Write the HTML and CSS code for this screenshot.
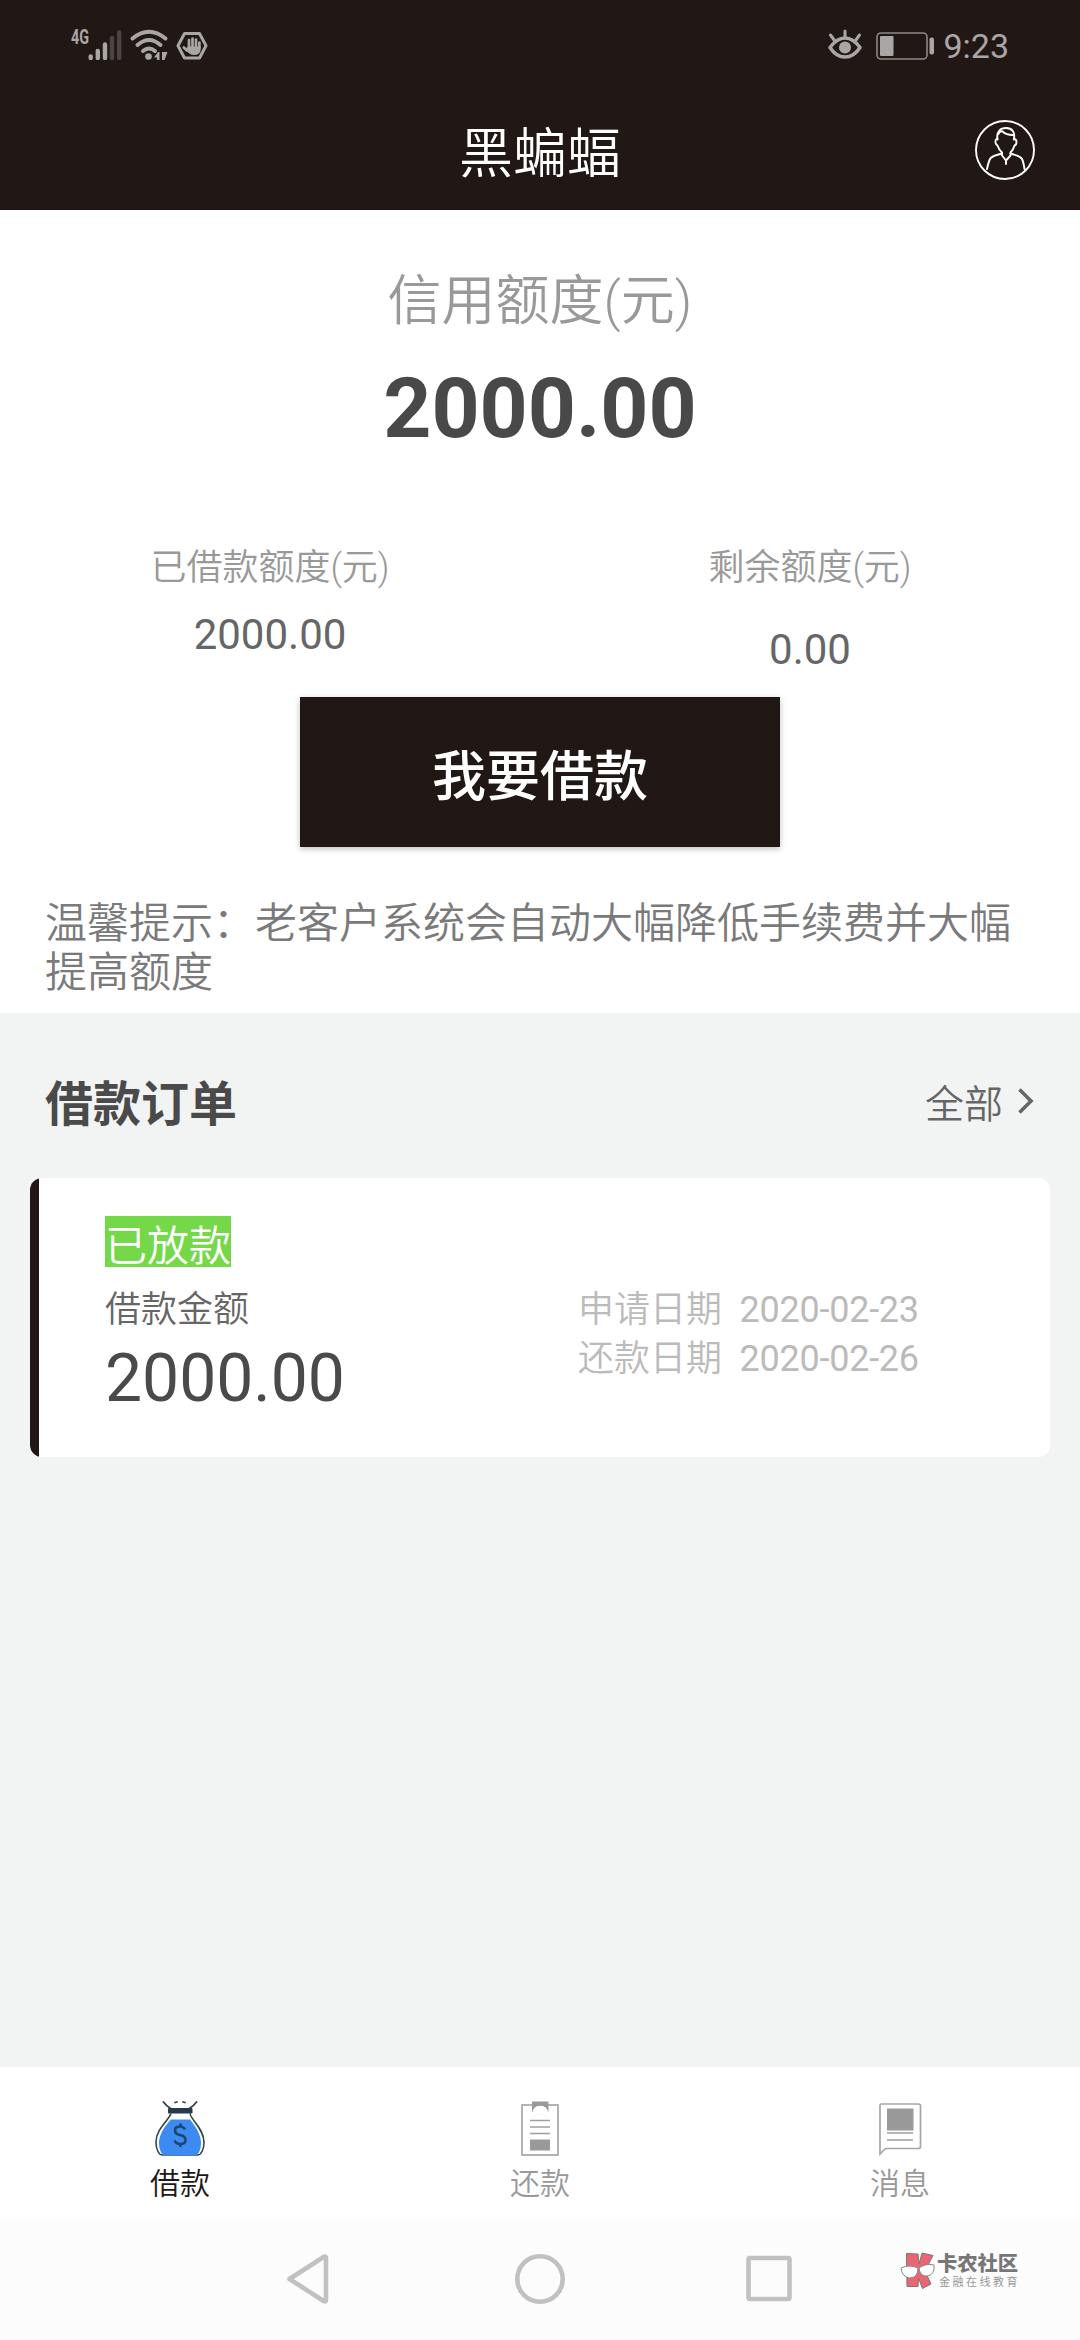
FILE: index.html
```html
<!DOCTYPE html>
<html lang="zh-CN">
<head>
<meta charset="utf-8">
<title>黑蝙蝠</title>
<link rel="stylesheet" href="styles.css">
</head>
<body>
<div class="screen">
  <header class="top">
    <div class="status">
      <svg class="status-left" viewBox="0 0 140 40" fill="none">
        <text class="net" x="1" y="24" textLength="18" lengthAdjust="spacingAndGlyphs">4G</text>
        <g stroke-width="4.4" stroke-linecap="round">
          <path class="lit" d="M20.700 36.500V38M27.800 31V38M35 24.500V38"/>
          <path class="dim" d="M42 18V38M49.200 12.500V38"/>
        </g>
        <g class="lit" stroke-width="4" stroke-linecap="round">
          <path d="M62.500 18.500Q79 5 95.500 18.500M67.500 25Q79 15 90.500 25M73 31Q79 26 85 31"/>
        </g>
        <circle class="fill" cx="78.500" cy="36.500" r="3.300"/>
        <path class="fill" d="M89.500 32V40H87V37.500H84L88 32zM92 32H97.500L94.500 40H92z"/>
        <path class="lit" stroke-width="3" stroke-linejoin="round" d="M108 25.700L114.500 13.500H129.500L136 25.700L129.500 38H114.500z"/>
        <path class="lit" stroke-width="2.700" stroke-linecap="round" d="M119 28V20M122.500 27V18.500M126 27V19.500M129.400 28V22.500M117 30.500L113.800 27.500"/>
        <path class="fill" d="M117.700 26.500H130.700V29Q130.500 35 124 35Q119.500 35 115.500 29.500z"/>
      </svg>
      <div class="status-right">
        <svg class="eye" viewBox="0 0 34 32" fill="none">
          <path class="lit" stroke-width="3.400" stroke-linejoin="round" d="M2 18.500Q9 9 17 9T32 18.500Q26 28 17 28T2 18.500z"/>
          <circle class="fill" cx="17" cy="18.500" r="6"/>
          <path class="lit" stroke-width="3" stroke-linecap="round" d="M17 2V8M2.500 6L6.500 11.500M31.500 6L27.500 11.500"/>
        </svg>
        <svg class="battery" viewBox="0 0 58 28" fill="none">
          <rect class="outline" x="1" y="1" width="50" height="26" rx="4" stroke-width="1.600"/>
          <rect class="fill" x="4" y="4" width="13.500" height="20" rx="1"/>
          <rect class="fill" x="53.500" y="5.500" width="4.500" height="17" rx="2"/>
        </svg>
        <span class="clock">9:23</span>
      </div>
    </div>
    <div class="titlebar">
      <span class="spacer"></span>
      <h1 class="title">黑蝙蝠</h1>
      <svg class="avatar" viewBox="0 0 60 60" fill="none" stroke="#fff" stroke-width="1.900" stroke-linejoin="round" stroke-linecap="round">
        <circle cx="30" cy="30" r="29"/>
        <path d="M22.500 19.500C21 11 26 8 31 8C37 8 40.500 12 38.800 19.500M23.500 14Q25 10.500 27.500 11.500Q32 15.500 39 15"/>
        <path d="M22.500 19Q20 19 20.500 22.500Q21 25 22.500 25.500Q24 30 27 32.500V35.500L31 40.500L35.500 35.500V32.500Q38.500 29.500 39.500 25.500Q41.500 25 41.500 22Q41.500 19 39 19M31 40.500V44"/>
        <path d="M27 33.500C21 35.500 17 35.500 15 39Q13.500 42 12 49M35.500 33.500C41 35.500 45 35.500 47 39Q48.500 42 49.500 49"/>
      </svg>
    </div>
  </header>

  <section class="credit">
    <div class="credit-label">信用额度(元)</div>
    <div class="credit-total">2000.00</div>
    <div class="split">
      <div class="col"><div class="col-label">已借款额度(元)</div><div class="col-value">2000.00</div></div>
      <div class="col"><div class="col-label">剩余额度(元)</div><div class="col-value low">0.00</div></div>
    </div>
    <button class="borrow">我要借款</button>
    <p class="tip">温馨提示：老客户系统会自动大幅降低手续费并大幅提高额度</p>
  </section>

  <main class="orders">
    <div class="orders-head">
      <h2 class="orders-title">借款订单</h2>
      <div class="all"><span>全部</span>
        <svg class="chevron" viewBox="0 0 18 28" fill="none"><path d="M2.500 2.500L14 14L2.500 25.500" stroke="#666" stroke-width="3.600"/></svg>
      </div>
    </div>
    <article class="card">
      <div class="card-bar"></div>
      <div class="card-main">
        <span class="badge">已放款</span>
        <div class="amount-label">借款金额</div>
        <div class="amount">2000.00</div>
      </div>
      <div class="dates">
        <div class="date">申请日期&nbsp; <span class="day">2020-02-23</span></div>
        <div class="date">还款日期&nbsp; <span class="day">2020-02-26</span></div>
      </div>
    </article>
  </main>

  <nav class="tabs">
    <div class="tab active">
      <svg class="tab-icon" viewBox="0 0 54 56" fill="none">
        <path d="M18 12.500C16 19 3 28 3 41C3 49 6 54 9.500 54H44.500C48 54 51 49 51 41C51 28 38 19 37 12.500" stroke="#34434e" stroke-width="1.600"/>
        <path d="M18 18.500H37C43 26 48 34 48 42C48 49 45 54.500 42 54.500H12C9 54.500 6 49 6 42C6 34 11 26 18 18.500z" fill="#3b8bf2"/>
        <path d="M10.500 1Q13 4.500 17 7M43.500 1Q41 4.500 37 7M22 1.500L24 1M30 1L32 1.500" stroke="#34434e" stroke-width="1.800" stroke-linecap="round"/>
        <rect x="15" y="7" width="24.500" height="5.500" rx="1" fill="#253b47"/>
        <path d="M32 28.500Q30.500 25.500 27 25.500Q22 25.500 22 29.500Q22 33 27 34Q32.500 35 32.500 39Q32.500 43 27.500 43Q23 43 21.500 39.500M27.500 22.500V25.500M27.500 43V46" stroke="#1d456e" stroke-width="2.600"/>
      </svg>
      <span>借款</span>
    </div>
    <div class="tab">
      <svg class="tab-icon" viewBox="0 0 54 56" fill="none">
        <rect x="9" y="4" width="36" height="50" stroke="#a6a6a6" stroke-width="1.700"/>
        <path d="M19 0.500H35.500V11.500Q33.500 4.500 27.300 4.500Q21 4.500 19 11.500z" fill="#999"/>
        <path d="M17 19.500H37M17 26H37M17 32.500H37" stroke="#a0a0a0" stroke-width="1.700"/>
        <rect x="17" y="38.500" width="20" height="11" fill="#999"/>
      </svg>
      <span>还款</span>
    </div>
    <div class="tab">
      <svg class="tab-icon" viewBox="0 0 54 56" fill="none">
        <path d="M8 3H45.500Q47.500 3 47.500 5V45.500Q47.500 47.500 45.500 47.500H12.500L7 53V4z" stroke="#a6a6a6" stroke-width="1.700"/>
        <rect x="14" y="7.500" width="26.500" height="22" fill="#999"/>
        <path d="M14 32H40M14 39H40" stroke="#a0a0a0" stroke-width="1.700"/>
      </svg>
      <span>消息</span>
    </div>
  </nav>

  <footer class="sysnav">
    <svg class="sys back" viewBox="0 0 50 54" fill="none"><path d="M4.500 27L39 4.800Q41 4 41 6V48Q41 50 39 49.200z"/></svg>
    <svg class="sys home" viewBox="0 0 54 54" fill="none"><circle cx="27" cy="27" r="22.700"/></svg>
    <svg class="sys recent" viewBox="0 0 54 54" fill="none"><rect x="6.500" y="6" width="41" height="41" rx="1.500"/></svg>
    <div class="brand">
      <svg class="brand-mark" viewBox="0 0 36 38">
        <path d="M6.500 1.500L18 2L19 12L22 1L33 3.500L25 19L31 32L22.500 36.500L18.500 26L18 34.500H7z" fill="#ea6672" stroke="#777" stroke-width="1"/>
        <g fill="#fff" stroke="#888" stroke-width="1"><path d="M1 16Q9 12 18 16Q18 26 9.500 26Q2 25 1 16z"/><path d="M19 16Q26 11 34 13Q35 22 28 24Q20 25 19 16z"/></g>
      </svg>
      <div class="brand-text"><b class="brand-name">卡农社区</b><span class="brand-sub">金融在线教育</span></div>
    </div>
  </footer>
</div>
</body>
</html>
```
FILE: styles.css
```css
* { box-sizing: border-box; margin: 0; padding: 0; }
body {
  font-family: Roboto, "Noto Sans CJK SC", sans-serif;
  font-weight: 400;
  background: #f2f4f4;
}
.screen { width: 1080px; height: 2340px; display: flex; flex-direction: column; overflow: hidden; }

.top { height: 210px; background: #211815; color: #fff; }
.status { height: 90px; padding: 20px 71px 0 70px; display: flex; justify-content: space-between; align-items: flex-start; }
.status-left { width: 140px; height: 40px; }
.status-right { display: flex; align-items: flex-start; }
.lit { stroke: #aaa6a5; }
.dim { stroke: #4c4442; }
.outline { stroke: #8d8887; }
.fill { fill: #aaa6a5; }
.net { font: 700 20px Roboto, sans-serif; fill: #aaa6a5; }
.eye { width: 34px; height: 32px; margin: 9px 14px 0 0; }
.battery { width: 58px; height: 28px; margin: 12px 9px 0 0; }
.clock { font-size: 34px; line-height: 40px; color: #aaa6a5; margin-top: 6px; }
.titlebar { height: 120px; padding: 0 45px; display: grid; grid-template-columns: 60px 1fr 60px; align-items: center; }
.title { padding-top: 10px; font-size: 54px; line-height: 64px; font-weight: 350; text-align: center; }
.avatar { width: 60px; height: 60px; }

.credit { height: 803px; background: #fff; display: flex; flex-direction: column; align-items: center; }
.credit-label { margin-top: 60px; font-size: 54px; line-height: 64px; color: #999; font-weight: 350; }
.credit-total { margin-top: 26px; font-size: 84px; line-height: 98px; font-weight: 700; color: #494949; }
.split { width: 100%; height: 153px; margin-top: 86px; display: grid; grid-template-columns: 1fr 1fr; }
.col { text-align: center; }
.col-label { font-size: 36px; line-height: 48px; color: #999; font-weight: 350; }
.col-value { margin-top: 18px; font-size: 42px; line-height: 50px; color: #666; }
.low { margin-top: 33px; }
.borrow { width: 480px; height: 150px; flex: none; border: 0; background: #211815; color: #fff; font-family: inherit; font-size: 54px; font-weight: 500; box-shadow: 0 2px 6px rgba(0, 0, 0, .25); }
.tip { width: 100%; margin-top: 52px; padding: 0 45px; font-size: 42px; line-height: 49px; color: #7a7a7a; font-weight: 350; }

.orders { height: 1054px; background: #f2f4f4; padding: 0 30px; }
.orders-head { height: 165px; padding: 18px 15px 0; display: flex; align-items: center; justify-content: space-between; }
.orders-title { font-size: 48px; line-height: 56px; font-weight: 700; color: #4a4a4a; }
.all { display: flex; align-items: center; gap: 14px; font-size: 39px; line-height: 46px; color: #666; font-weight: 350; }
.chevron { width: 18px; height: 28px; margin-top: -7px; }
.card { height: 279px; background: #fff; border-radius: 12px; overflow: hidden; display: flex; }
.card-bar { width: 9px; background: #211815; }
.card-main { width: 539px; padding: 38px 0 0 66px; display: flex; flex-direction: column; align-items: flex-start; }
.badge { height: 51px; font-size: 42px; line-height: 61px; background: #74d848; color: #fff; font-weight: 350; }
.amount-label { margin-top: 19px; font-size: 36px; line-height: 48px; color: #666; font-weight: 350; }
.amount { margin-top: 6px; font-size: 66px; line-height: 78px; color: #4a4a4a; }
.dates { padding-top: 108px; }
.date { font-size: 36px; line-height: 49px; color: #bbb; white-space: nowrap; font-weight: 350; }
.day { font-weight: 400; letter-spacing: -0.250px; }

.tabs { height: 150px; background: #fff; display: grid; grid-template-columns: repeat(3, 1fr); }
.tab { padding-top: 34px; display: flex; flex-direction: column; align-items: center; font-size: 30px; line-height: 36px; color: #999; font-weight: 350; }
.tab-icon { width: 54px; height: 56px; margin-bottom: 9px; }
.active { color: #211815; }

.sysnav { height: 123px; background: #fcfcfc; display: flex; align-items: flex-start; padding: 35px 62px 0 285px; }
.sys { stroke: #c1c1c1; stroke-width: 4.600; stroke-linejoin: round; height: 54px; flex: none; }
.back { width: 50px; }
.home { width: 54px; margin-left: 178px; }
.recent { width: 54px; margin-left: 175px; }
.brand { display: flex; margin-left: 104px; }
.brand-mark { width: 36px; height: 38px; flex: none; }
.brand-text { display: flex; flex-direction: column; margin-left: 1px; white-space: nowrap; }
.brand-name { font-size: 20.300px; line-height: 24px; font-weight: 900; color: #777; }
.brand-sub { padding-left: 2px; font-size: 11px; line-height: 13px; letter-spacing: 2.500px; color: #999; }
```
